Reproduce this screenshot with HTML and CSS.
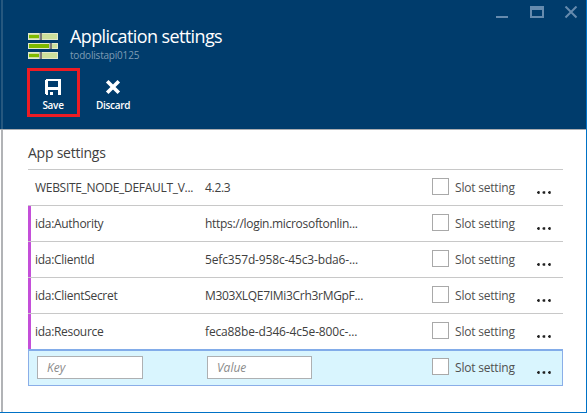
FILE: index.html
```html
<!DOCTYPE html>
<html lang="en">
<head>
<meta charset="utf-8">
<title>Application settings</title>
<link rel="stylesheet" href="styles.css">
</head>
<body>
<main class="blade">
  <header class="header">
    <div class="title-row">
      <svg class="app-icon" width="30" height="27" viewBox="0 0 30 27" shape-rendering="crispEdges">
        <path fill="#e3eacb" d="M0 0h30v7H0zM0 10h30v6H0zM0 19h30v7H0z"/>
        <path fill="#cce09b" d="M1 1h28v5H1zM1 11h28v4H1zM1 20h28v5H1z"/>
        <path fill="#7fba00" d="M1 2h10v3H1zM1 11h20v4H1zM1 21h10v3H1z"/>
        <path fill="#7a7a7a" d="M12 0h2v7h-2zM22 10h2v6h-2zM12 19h2v7h-2z"/>
        <path fill="#b8b8b8" d="M11 0h1v7h-1zM21 10h1v6h-1zM11 19h1v7h-1z"/>
      </svg>
      <div class="titles">
        <h1>Application settings</h1>
        <p>todolistapi0125</p>
      </div>
      <svg class="window-controls" width="82" height="13" viewBox="0 0 82 13">
        <path fill="#668bae" d="M0 10h12v2H0z"/>
        <path fill="#668bae" fill-rule="evenodd" d="M34 0h14v12H34zM36 4v6h10V4z"/>
        <path stroke="#668bae" stroke-width="2" d="M69.500 .5l11 11M80.500 .5l-11 11"/>
      </svg>
    </div>
    <nav class="toolbar">
      <button class="command highlighted">
        <svg width="16" height="16" viewBox="0 0 16 16" shape-rendering="crispEdges"><path fill="#fff" fill-rule="evenodd" d="M1 0h14l1 1v15h-3v-5H3v5H1l-1-1V1zM3 2v6h10V2z"/><path fill="#fff" d="M5 13h3v3H5z"/></svg>
        <span>Save</span>
      </button>
      <button class="command">
        <svg width="16" height="16" viewBox="0 0 16 16"><path stroke="#fff" stroke-width="3.600" d="M2.200 2.200l11.600 11.600M13.800 2.200L2.200 13.800"/></svg>
        <span>Discard</span>
      </button>
    </nav>
  </header>
  <section class="settings">
    <h2>App settings</h2>
    <div class="row"><span class="key">WEBSITE_NODE_DEFAULT_V...</span><span class="value">4.2.3</span><i class="check"></i><span class="slot">Slot setting</span><i class="more"></i></div>
    <div class="row edited"><span class="key">ida:Authority</span><span class="value">https://login.microsoftonlin...</span><i class="check"></i><span class="slot">Slot setting</span><i class="more"></i></div>
    <div class="row edited"><span class="key">ida:ClientId</span><span class="value guid">5efc357d-958c-45c3-bda6-...</span><i class="check"></i><span class="slot">Slot setting</span><i class="more"></i></div>
    <div class="row edited"><span class="key">ida:ClientSecret</span><span class="value">M303XLQE7IMi3Crh3rMGpF...</span><i class="check"></i><span class="slot">Slot setting</span><i class="more"></i></div>
    <div class="row edited"><span class="key">ida:Resource</span><span class="value guid">feca88be-d346-4c5e-800c-...</span><i class="check"></i><span class="slot">Slot setting</span><i class="more"></i></div>
    <div class="row active"><span class="key"><input class="field" placeholder="Key"></span><span class="value"><input class="field" placeholder="Value"></span><i class="check"></i><span class="slot">Slot setting</span><i class="more"></i></div>
  </section>
</main>
</body>
</html>
```
FILE: styles.css
```css
* { box-sizing: border-box; }
body {
  margin: 0;
  width: 587px;
  height: 413px;
  overflow: hidden;
  background: #fff;
  color: #404040;
  font-family: "Open Sans", "Noto Sans", sans-serif;
  font-size: 12px;
}
h1, h2, p { margin: 0; font-weight: 400; white-space: nowrap; }
.blade {
  height: 413px;
  border-right: 1px solid #0072c6;
  border-bottom: 1px solid #0072c6;
  background: linear-gradient(90deg, #fff 1px, #b1b3b6 1px, #b1b3b6 3px, #fff 3px);
}
.header {
  height: 130px;
  border-bottom: 1px solid #aaadb1;
  background: linear-gradient(90deg, #003c6c 1px, #26587f 1px, #26587f 3px, #003c6c 3px);
  color: #fff;
}
.title-row { display: flex; height: 68px; padding: 0 8px 0 28px; }
.app-icon { margin-top: 33px; }
.titles { flex: 1; padding: 24px 0 0 12px; }
h1 { font-size: 18px; line-height: 25px; letter-spacing: -0.6px; }
.titles p { font-size: 10px; line-height: 13px; color: #7f9db5; letter-spacing: -0.2px; }
.window-controls { margin-top: 6px; }
.toolbar { display: flex; gap: 7px; padding-left: 27px; }
.command {
  display: flex;
  flex-direction: column;
  align-items: center;
  width: 53px;
  height: 49px;
  padding: 8px 1px 0 0;
  border: 3px solid transparent;
  background: none;
  color: #fff;
  font: 600 10px/14px "Open Sans", sans-serif;
  letter-spacing: -0.3px;
}
.command svg { margin-right: 1px; }
.command span { margin-top: 3px; }
.highlighted { border-color: #ed1c24; }
.settings { padding: 13px 23px 0 28px; }
h2 { height: 26px; font-size: 14px; line-height: 20px; letter-spacing: -0.24px; }
.row {
  display: grid;
  grid-template-columns: 170px 227px 23px 82px 14px;
  align-items: center;
  height: 36px;
  padding-left: 7px;
  border-top: 1px solid #c8c8c8;
  line-height: 18px;
  letter-spacing: -0.3px;
  white-space: nowrap;
}
.edited { box-shadow: inset 3px 0 #c44fd9; }
.guid { letter-spacing: -0.15px; }
.slot { letter-spacing: -0.2px; color: #505050; }
.check { width: 17px; height: 17px; border: 1px solid #a9a9a9; background: #fff; align-self: start; margin-top: 8px; }
.more {
  width: 15px;
  height: 3px;
  margin-top: 9px;
  background: radial-gradient(circle at 1.500px 1.500px, #222 1.100px, transparent 1.600px) 0 0 / 5.500px 3px;
}
.active {
  height: 37px;
  padding-left: 6px;
  border: 1px solid #8aaee8;
  border-top: 2px solid #82ace9;
  background: #d9f5fe;
}
.active .check { margin-top: 7px; }
.field {
  display: block;
  width: 106px;
  height: 23px;
  margin: -2px 0 0 2px;
  padding: 0 9px;
  border: 1px solid #aeb0b2;
  background: #fff;
  font: italic 12px "Open Sans", sans-serif;
}
.value .field { width: 105px; }
.field::placeholder { color: #8b8b8b; opacity: 1; }
```
